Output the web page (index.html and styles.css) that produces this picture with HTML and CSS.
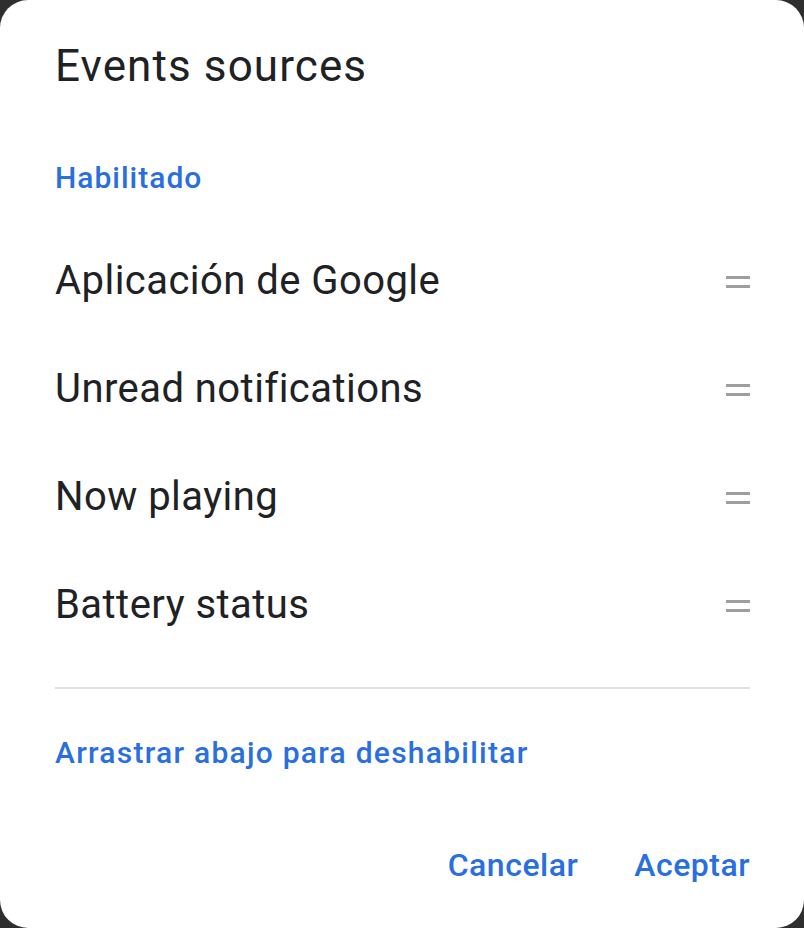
FILE: index.html
```html
<!DOCTYPE html>
<html>
  <head>
    <meta charset="utf-8" />
    <meta name="viewport" content="width=device-width,initial-scale=1.0" />
    <title>Events sources</title>
    <link rel="stylesheet" href="styles.css">
  </head>
  <body>
    <div class="dialog">
      <h1 class="title">Events sources</h1>

      <div class="section-label">Habilitado</div>

      <ul class="sources">
        <li class="source">
          <span class="source-name">Aplicación de Google</span>
          <span class="handle"></span>
        </li>
        <li class="source">
          <span class="source-name">Unread notifications</span>
          <span class="handle"></span>
        </li>
        <li class="source">
          <span class="source-name">Now playing</span>
          <span class="handle"></span>
        </li>
        <li class="source">
          <span class="source-name">Battery status</span>
          <span class="handle"></span>
        </li>
      </ul>

      <hr class="divider" />

      <div class="section-label hint">Arrastrar abajo para deshabilitar</div>

      <div class="actions">
        <button class="action">Cancelar</button>
        <button class="action">Aceptar</button>
      </div>
    </div>
  </body>
</html>
```

FILE: styles.css
```css
body {
  margin: 0;
  background: #2e2e2e;
  font-family: Roboto, "Noto Sans", sans-serif;
  color: #202124;
}

.dialog {
  background: #fff;
  border-radius: 28px;
  height: 928px;
  box-sizing: border-box;
  padding: 0 54px 0 55px;
  display: flex;
  flex-direction: column;
}

.title {
  margin: 40px 0 0;
  font-size: 44px;
  font-weight: 400;
  line-height: 52px;
  letter-spacing: 1.1px;
}

.section-label {
  margin-top: 66px;
  font-size: 30px;
  font-weight: 500;
  line-height: 40px;
  letter-spacing: 1px;
  color: #2a6fdf;
}

.sources {
  list-style: none;
  margin: 29px 0 0;
  padding: 0;
}

.source {
  height: 108px;
  display: flex;
  align-items: center;
  justify-content: space-between;
}

.source-name {
  font-size: 40px;
  line-height: 48px;
  letter-spacing: 0.45px;
}

/* drag handle: two short grey bars */
.handle {
  width: 24px;
  height: 12px;
  margin-top: 2px;
  border-top: 3px solid #9e9e9e;
  border-bottom: 3px solid #9e9e9e;
  box-sizing: border-box;
}

.divider {
  margin: 28px 0 0;
  border: none;
  height: 2px;
  background: #e0e0e0;
}

.hint {
  margin-top: 44px;
  letter-spacing: 1.25px;
}

.actions {
  margin-top: 70px;
  display: flex;
  justify-content: flex-end;
  gap: 56px;
}

button.action {
  border: none;
  margin: 0;
  padding: 0;
  background: transparent;
  font: inherit;
  font-size: 32px;
  font-weight: 500;
  line-height: 44px;
  letter-spacing: 0.5px;
  color: #2a6fdf;
  cursor: pointer;
}
```
